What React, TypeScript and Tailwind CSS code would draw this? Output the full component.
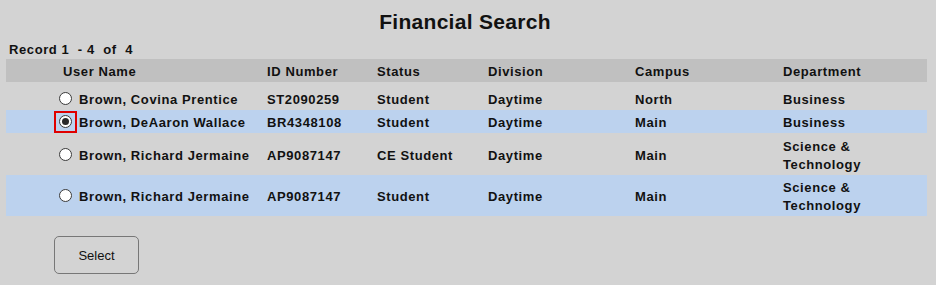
import React from "react";

type Row = {
  name: string;
  id: string;
  status: string;
  division: string;
  campus: string;
  dept: string[];
  hl: boolean;
  sel: boolean;
  h: string;
};

const rows: Row[] = [
  { name: "Brown, Covina Prentice", id: "ST2090259", status: "Student", division: "Daytime", campus: "North", dept: ["Business"], hl: false, sel: false, h: "h-[23px]" },
  { name: "Brown, DeAaron Wallace", id: "BR4348108", status: "Student", division: "Daytime", campus: "Main", dept: ["Business"], hl: true, sel: true, h: "h-[23px]" },
  { name: "Brown, Richard Jermaine", id: "AP9087147", status: "CE Student", division: "Daytime", campus: "Main", dept: ["Science &", "Technology"], hl: false, sel: false, h: "h-[42px]" },
  { name: "Brown, Richard Jermaine", id: "AP9087147", status: "Student", division: "Daytime", campus: "Main", dept: ["Science &", "Technology"], hl: true, sel: false, h: "h-[41px]" },
];

function Radio({ sel }: { sel: boolean }) {
  const circle = (
    <span className="w-[13px] h-[13px] rounded-full bg-white border border-[#3a3a3a] flex items-center justify-center">
      {sel && <span className="w-[7px] h-[7px] rounded-full bg-[#2a2a2a]" />}
    </span>
  );
  if (sel) {
    return (
      <span className="w-[23px] h-[22px] border-2 border-[#e00000] flex items-center justify-center ml-[1px]">
        {circle}
      </span>
    );
  }
  return <span className="ml-[6px]">{circle}</span>;
}

export default function App() {
  return (
    <div
      className="w-[936px] h-[285px] bg-[#d3d3d3] text-[#111] overflow-hidden"
      style={{ fontFamily: '"Liberation Sans", Arial, sans-serif' }}
    >
      <div className="h-[41px] flex items-end justify-center">
        <h1 className="text-[21px] font-bold leading-[26px] pb-[6px] pr-[6px] tracking-[0.3px]">Financial Search</h1>
      </div>
      <div className="pl-[9px] text-[13px] font-bold leading-[15px] h-[18px] pt-[1px] whitespace-pre tracking-[0.6px]">Record 1  - 4  of  4</div>
      <div className="ml-[6px] w-[921px] tracking-[0.6px]">
        <div className="h-[23px] bg-[#c0c0c0] flex items-center text-[13px] font-bold pl-[57px] pt-[2px]">
          <div className="w-[204px]">User Name</div>
          <div className="w-[110px]">ID Number</div>
          <div className="w-[111px]">Status</div>
          <div className="w-[147px]">Division</div>
          <div className="w-[148px]">Campus</div>
          <div>Department</div>
        </div>
        <div className="h-[5px]" />
        {rows.map((r, i) => (
          <div
            key={i}
            className={`${r.h} ${r.hl ? "bg-[#bcd2ee]" : ""} flex items-center text-[13px] font-bold pl-[47px]`}
          >
            <div className="w-[26px] flex items-center">
              <Radio sel={r.sel} />
            </div>
            <div className="w-[188px] pt-[3px]">{r.name}</div>
            <div className="w-[110px] pt-[3px]">{r.id}</div>
            <div className="w-[111px] pt-[3px]">{r.status}</div>
            <div className="w-[147px] pt-[3px]">{r.division}</div>
            <div className="w-[148px] pt-[3px]">{r.campus}</div>
            <div className="leading-[18px] pt-[3px]">
              {r.dept.map((d, j) => (
                <div key={j}>{d}</div>
              ))}
            </div>
          </div>
        ))}
      </div>
      <div className="pl-[54px] pt-[20px]">
        <button className="w-[85px] h-[38px] rounded-[5px] border border-[#777] bg-[#d3d3d3] text-[13px] text-[#111] pt-[1px]">
          Select
        </button>
      </div>
    </div>
  );
}
